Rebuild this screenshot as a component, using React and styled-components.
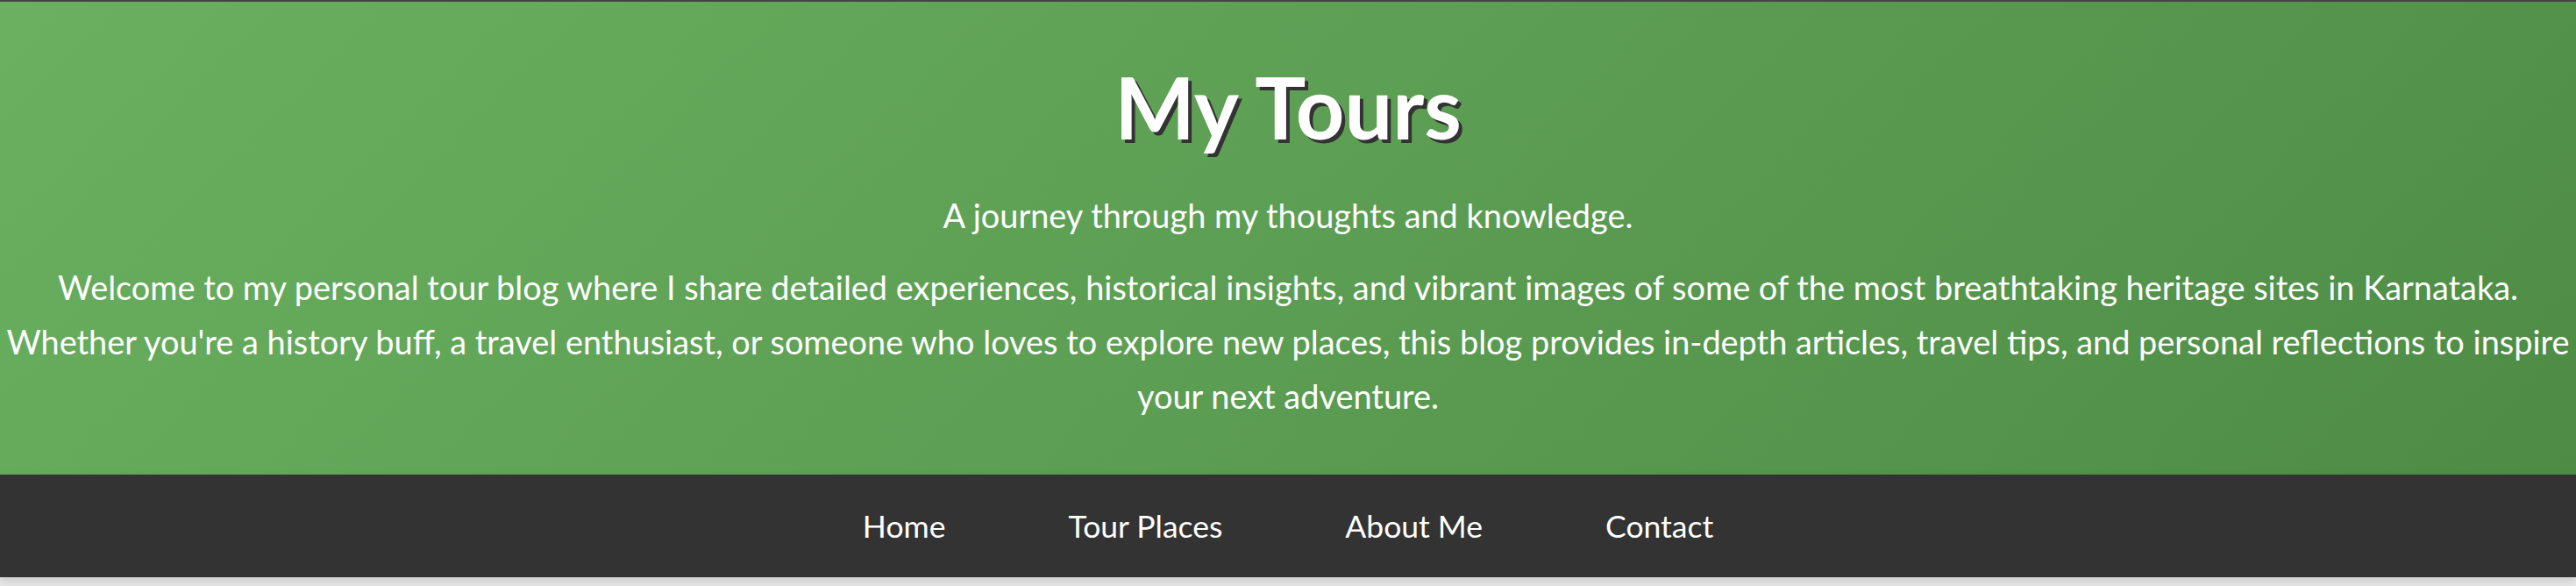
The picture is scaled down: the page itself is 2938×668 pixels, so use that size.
import React from "react";
import styled, { createGlobalStyle } from "styled-components";

const GlobalStyle = createGlobalStyle`
  html, body {
    margin: 0;
    padding: 0;
    background-color: #e6e6e6;
    font-family: Lato, "Open Sans", sans-serif;
  }
  * {
    box-sizing: border-box;
  }
`;

const Page = styled.div`
  border-top: 2px solid #444;
  min-height: 668px;
`;

const Header = styled.header`
  background: linear-gradient(135deg, #6ab060, #4e8c46);
  color: white;
  text-align: center;
  padding: 62px 0 58px;
`;

const Title = styled.h1`
  margin: 0;
  font-size: 97px;
  font-weight: 700;
  line-height: 116px;
  text-shadow: 4px 4px 0 #333;
`;

const Text = styled.p`
  margin: ${(props) => (props.sub ? "35px 0 0" : "20px 0 0")};
  font-size: 37.9px;
  line-height: 62px;
`;

const Nav = styled.nav`
  background-color: #333;
  height: 117px;
  display: flex;
  justify-content: center;
  align-items: center;
  gap: 140px;
  box-shadow: 0 4px 10px rgba(0, 0, 0, 0.12);
`;

const NavLink = styled.a`
  color: white;
  text-decoration: none;
  font-size: 35.5px;
  cursor: pointer;
  &:hover {
    opacity: 0.7;
  }
`;

const links = ["Home", "Tour Places", "About Me", "Contact"];

const App = () => {
  return (
    <>
      <GlobalStyle />
      <Page>
        <Header>
          <Title>My Tours</Title>
          <Text sub>A journey through my thoughts and knowledge.</Text>
          <Text>
            Welcome to my personal tour blog where I share detailed experiences,
            historical insights, and vibrant images of some of the most
            breathtaking heritage sites in Karnataka.
            <br />
            Whether you're a history buff, a travel enthusiast, or someone who
            loves to explore new places, this blog provides in-depth articles,
            travel tips, and personal reflections to inspire your next
            adventure.
          </Text>
        </Header>
        <Nav>
          {links.map((link) => (
            <NavLink key={link}>{link}</NavLink>
          ))}
        </Nav>
      </Page>
    </>
  );
};

export default App;
